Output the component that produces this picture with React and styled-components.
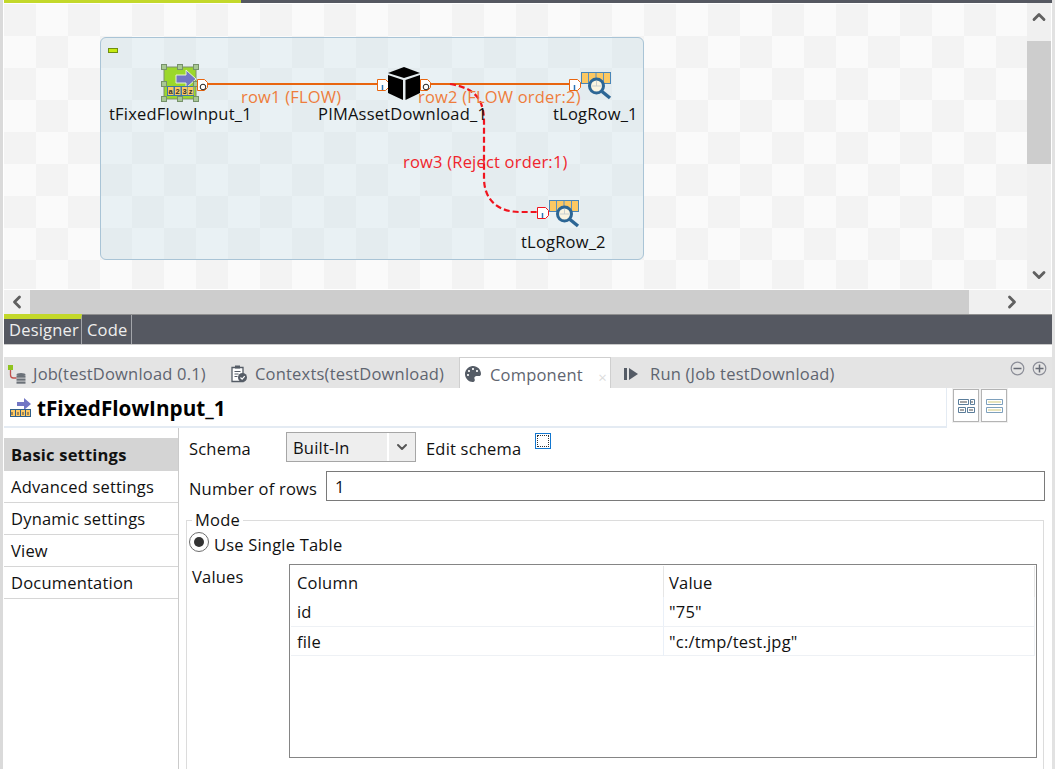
import React from 'react';
import styled, { createGlobalStyle } from 'styled-components';
import { ChevronUp, ChevronDown, ChevronLeft, ChevronRight } from 'lucide-react';
import { FaPalette } from 'react-icons/fa';

const UI_FONT = '"Open Sans", "Noto Sans", sans-serif';

const GlobalStyle = createGlobalStyle`
  html, body { margin: 0; padding: 0; background: #fff; }
  body { font-family: ${UI_FONT}; }
`;

const ORANGE = '#e8650f';
const RED = '#f0141e';

function LogRowIcon({ x, y }) {
  return (
    <g transform={`translate(${x} ${y})`}>
      <rect x="0.5" y="0.5" width="29" height="11" fill="#fcc862" stroke="#4a86b8" />
      <path d="M7.5 1v10M15 1v6M22.5 1v10" stroke="#5a90c0" />
      <circle cx="15.5" cy="14" r="7" fill="#faf4e0" stroke="#2c6695" strokeWidth="3" />
      <path d="M15.5 9v5M10.5 14h10" stroke="#c8cfd0" />
      <path d="M21 19.5l8 6.5" stroke="#2c6695" strokeWidth="3.5" />
    </g>
  );
}

function InConnector({ x, y, color }) {
  return (
    <g transform={`translate(${x} ${y})`}>
      <path d="M.5 .5h8l3 3v5l-3 3h-8z" fill="#fff" stroke={color} />
      <path d="M5.5 6v5" stroke="#2a74b8" strokeWidth="1.5" />
    </g>
  );
}

function OutConnector({ x, y }) {
  return (
    <g transform={`translate(${x} ${y})`}>
      <path d="M.5 .5h7l3 3v5l-3 3h-7z" fill="#fff" stroke={ORANGE} />
      <circle cx="6" cy="8" r="2.8" fill="#fff" stroke="#222" />
    </g>
  );
}

function JobDiagram() {
  const handles = [[164, 67], [180, 67], [196, 67], [164, 84], [196, 84], [164, 99], [180, 99], [196, 99]];
  return (
    <DiagramSvg viewBox="4 4 1023 285">
      <path d="M205 84H378M430 84H570" stroke={ORANGE} strokeWidth="2" fill="none" />
      <path d="M450 84C474 88 484 98 484 122V178C484 200 498 212 520 212H537" stroke={RED} strokeWidth="2.2" strokeDasharray="6 3" fill="none" />

      <rect x="164" y="67" width="32" height="32" fill="#9bd72b" stroke="#7d8f6c" />
      <path d="M176 75h10v-5l10 9-10 9v-5h-10z" fill="#7276c4" stroke="#e8f3d0" />
      <rect x="167" y="86" width="27" height="10" fill="#3c78a8" />
      {[168, 175, 182, 188].map((cx) => (
        <rect key={cx} x={cx} y="87" width="5.5" height="8" fill="#fcc862" />
      ))}
      <CellText x="170.7" y="94">a</CellText>
      <CellText x="177.7" y="94">2</CellText>
      <CellText x="184.7" y="94">3</CellText>
      <CellText x="190.7" y="94">z</CellText>
      {handles.map(([hx, hy]) => (
        <rect key={`${hx}-${hy}`} x={hx - 2.5} y={hy - 2.5} width="5" height="5" fill="#a8c894" stroke="#76916a" />
      ))}
      <OutConnector x={197} y={79} />

      <InConnector x={377} y={79} color={ORANGE} />
      <path d="M404 67l16 6-16 5-16-5z" fill="#000" />
      <path d="M388 75l15 5v20l-15-7z" fill="#000" />
      <path d="M405.500 80l14.500-5v18l-14.500 7z" fill="#000" />
      <OutConnector x={420} y={79} />

      <InConnector x={569} y={79} color={ORANGE} />
      <LogRowIcon x={581} y={72} />

      <InConnector x={537} y={207} color={RED} />
      <LogRowIcon x={549} y={200} />
    </DiagramSvg>
  );
}

function FlowInputSmallIcon() {
  return (
    <svg width="22" height="20" viewBox="0 0 22 20">
      <path d="M7 4h7V0l7 6-7 6V8H7z" fill="#7276c4" />
      <rect x="0.5" y="11.5" width="20" height="7" fill="#fcc862" stroke="#2f5f8a" />
      <path d="M5.5 12v6M10.5 12v6M15.5 12v6" stroke="#2f5f8a" />
      <path d="M2 14v3M8 14v3M13 14v3M18 14v3" stroke="#444" />
    </svg>
  );
}

function JobIcon() {
  return (
    <svg width="18" height="20" viewBox="0 0 18 20">
      <rect x="0" y="1" width="5" height="5" fill="#8fc31f" />
      <path d="M2.500 6v5c0 2 1 3 3 3h3" stroke="#c0504d" strokeWidth="1.3" fill="none" />
      <ellipse cx="13" cy="10.500" rx="4.500" ry="1.600" fill="#6b7178" />
      <rect x="8.500" y="11.500" width="9" height="2.200" fill="#6b7178" />
      <rect x="8.500" y="14.500" width="9" height="2.200" fill="#6b7178" />
      <rect x="8.500" y="17.500" width="9" height="2.200" fill="#6b7178" />
    </svg>
  );
}

function ContextIcon() {
  return (
    <svg width="18" height="18" viewBox="0 0 18 18">
      <path d="M2 2.500h11v14H2z" fill="#fff" stroke="#555c66" strokeWidth="1.3" />
      <rect x="5" y="0.500" width="5" height="3" fill="#555c66" />
      <path d="M4.500 6.500h6M4.500 9h4M4.500 11.500h3" stroke="#555c66" />
      <circle cx="12.500" cy="12.500" r="4.500" fill="#555c66" />
      <path d="M10.500 12.500l1.600 1.600 2.600-3" stroke="#fff" strokeWidth="1.2" fill="none" />
    </svg>
  );
}

function RunIcon() {
  return (
    <svg width="14" height="14" viewBox="0 0 14 14">
      <rect x="0" y="1" width="3" height="12" fill="#555c66" />
      <path d="M5 1l9 6-9 6z" fill="#555c66" />
    </svg>
  );
}

function CircleSign({ plus }) {
  return (
    <svg width="15" height="15" viewBox="0 0 15 15">
      <circle cx="7.500" cy="7.500" r="6.300" fill="none" stroke="#8c8e98" strokeWidth="1.2" />
      <path d={plus ? 'M3.500 7.500h8M7.500 3.500v8' : 'M3.500 7.500h8'} stroke="#666a74" strokeWidth="1.5" />
    </svg>
  );
}

function GridLayoutIcon() {
  return (
    <svg width="17" height="14" viewBox="0 0 17 14">
      <path d="M.5 .5h10v5H.5zM12.500 .5h4v5h-4zM.5 8.500h7v5h-7zM9.500 8.500h7v5h-7z" fill="#fff" stroke="#5a7d9a" />
      <path d="M2 3h7M14 2v2M2 11h4M11 11h4" stroke="#888" strokeWidth="1.5" />
    </svg>
  );
}

function RowsLayoutIcon() {
  return (
    <svg width="17" height="14" viewBox="0 0 17 14">
      <path d="M.5 .5h16v5H.5zM.5 8.500h16v5H.5z" fill="#fff" stroke="#7ea0bc" />
      <path d="M2 3h13M2 11h13" stroke="#e8e4bc" strokeWidth="2" />
    </svg>
  );
}

export default function App() {
  return (
    <Frame>
      <GlobalStyle />
      <TopBar><TopProgress /></TopBar>

      <Editor>
        <Canvas>
          <JobGroup><GroupToggle /></JobGroup>
          <JobDiagram />
          <WireLabel $x={237} $y={83} $color="#ee7d3c">row1 (FLOW)</WireLabel>
          <WireLabel $x={414} $y={83} $color="#ee7d3c">row2 (FLOW order:2)</WireLabel>
          <WireLabel $x={399} $y={148} $color="#f0252d">row3 (Reject order:1)</WireLabel>
          <NodeName $x={105} $y={100}>tFixedFlowInput_1</NodeName>
          <NodeName $x={314} $y={100}>PIMAssetDownload_1</NodeName>
          <NodeName $x={549} $y={100}>tLogRow_1</NodeName>
          <NodeName $x={517} $y={228}>tLogRow_2</NodeName>
        </Canvas>
        <VScroll>
          <UpArrow><ChevronUp size={20} strokeWidth={3.4} color="#606060" /></UpArrow>
          <VThumb />
          <ArrowGrow><ChevronDown size={20} strokeWidth={3.4} color="#606060" /></ArrowGrow>
        </VScroll>
        <HScroll>
          <LeftArrow><ChevronLeft size={20} strokeWidth={3.4} color="#606060" /></LeftArrow>
          <HThumb />
          <RightArrow><ChevronRight size={20} strokeWidth={3.4} color="#606060" /></RightArrow>
        </HScroll>
      </Editor>

      <ModeBar>
        <ModeTab $active>Designer</ModeTab>
        <ModeTab>Code</ModeTab>
      </ModeBar>

      <ViewTabs>
        <ViewTab $w={218} $pad={4} $gap={7}><TabIcon><JobIcon /></TabIcon>Job(testDownload 0.1)</ViewTab>
        <ViewTab $w={237} $pad={8} $gap={7}><TabIcon><ContextIcon /></TabIcon>Contexts(testDownload)</ViewTab>
        <ViewTab $w={152} $pad={4} $gap={8} $active>
          <TabIcon><FaPalette size={16} color="#555c66" /></TabIcon>Component
          <TabClose>×</TabClose>
        </ViewTab>
        <ViewTab $w={240} $pad={11} $gap={10}><TabIcon><RunIcon /></TabIcon>Run (Job testDownload)</ViewTab>
        <TabActions><CircleSign /><CircleSign plus /></TabActions>
      </ViewTabs>

      <TitleRow>
        <TitleBox>
          <FlowInputSmallIcon />
          <TitleText>tFixedFlowInput_1</TitleText>
        </TitleBox>
        <LayoutButton><GridLayoutIcon /></LayoutButton>
        <LayoutButton><RowsLayoutIcon /></LayoutButton>
      </TitleRow>

      <Body>
        <Sidebar>
          <SideItem $active>Basic settings</SideItem>
          <SideItem>Advanced settings</SideItem>
          <SideItem>Dynamic settings</SideItem>
          <SideItem>View</SideItem>
          <SideItem>Documentation</SideItem>
        </Sidebar>
        <Settings>
          <SchemaRow>
            <FieldLabel $w={97} $top={2}>Schema</FieldLabel>
            <SelectBox>
              <SelectValue>Built-In</SelectValue>
              <SelectArrow><ChevronDown size={16} strokeWidth={3} color="#555" /></SelectArrow>
            </SelectBox>
            <EditLabel>Edit schema</EditLabel>
            <EditButton><EditDots /></EditButton>
          </SchemaRow>
          <RowsRow>
            <FieldLabel $w={137} $top={4}>Number of rows</FieldLabel>
            <TextInput>1</TextInput>
          </RowsRow>
          <ModeGroup>
            <ModeLegend>Mode</ModeLegend>
            <RadioRow>
              <RadioOuter><RadioDot /></RadioOuter>
              <RadioText>Use Single Table</RadioText>
            </RadioRow>
            <ValuesRow>
              <ValuesLabel>Values</ValuesLabel>
              <ValuesTable>
                <TableHead>
                  <HeadCell>Column</HeadCell>
                  <HeadCell $second>Value</HeadCell>
                </TableHead>
                <TableRow $h={29}>
                  <BodyCell>id</BodyCell>
                  <BodyCell $second>"75"</BodyCell>
                </TableRow>
                <TableRow $h={28}>
                  <BodyCell>file</BodyCell>
                  <BodyCell $second>"c:/tmp/test.jpg"</BodyCell>
                </TableRow>
              </ValuesTable>
            </ValuesRow>
          </ModeGroup>
        </Settings>
      </Body>
    </Frame>
  );
}

const Frame = styled.div`
  box-sizing: border-box;
  width: 1055px;
  height: 769px;
  overflow: hidden;
  display: flex;
  flex-direction: column;
  padding-left: 1px;
  border-left: 3px solid #dadada;
  border-right: 3px solid #e2e2e2;
  background: #fff;
  color: #111;
  font-family: ${UI_FONT};
  font-size: 16.5px;
  letter-spacing: 0.2px;
`;

const TopBar = styled.div`
  height: 3px;
  flex: none;
  background: #555861;
`;

const TopProgress = styled.div`
  width: 237px;
  height: 100%;
  background: #c3d82a;
`;

const Editor = styled.div`
  flex: none;
  display: grid;
  grid-template-columns: 1023px 24px;
  grid-template-rows: 286px 25px;
  height: 311px;
`;

const Canvas = styled.div`
  position: relative;
  margin-top: 1px;
  overflow: hidden;
  background-color: #fafafa;
  background-image:
    linear-gradient(45deg, #f3f3f3 25%, transparent 25%, transparent 75%, #f3f3f3 75%),
    linear-gradient(45deg, #f3f3f3 25%, transparent 25%, transparent 75%, #f3f3f3 75%);
  background-size: 64px 64px;
  background-position: 32px 0, 0 32px;
`;

const JobGroup = styled.div`
  position: absolute;
  left: 96px;
  top: 33px;
  box-sizing: border-box;
  width: 544px;
  height: 223px;
  border: 1px solid #a9c4d6;
  border-radius: 6px;
  background: rgba(205, 225, 235, 0.38);
`;

const GroupToggle = styled.div`
  position: absolute;
  left: 7px;
  top: 10px;
  box-sizing: border-box;
  width: 10px;
  height: 5px;
  background: #c6ea10;
  border: 1px solid #6f8f10;
`;

const DiagramSvg = styled.svg`
  position: absolute;
  left: 0;
  top: 0;
  width: 1023px;
  height: 285px;
`;

const CellText = styled.text`
  font-family: "Liberation Sans", sans-serif;
  font-size: 7.5px;
  font-weight: 700;
  fill: #333;
  text-anchor: middle;
`;

const WireLabel = styled.div`
  position: absolute;
  left: ${(p) => p.$x}px;
  top: ${(p) => p.$y}px;
  color: ${(p) => p.$color};
  line-height: 20px;
  white-space: nowrap;
`;

const NodeName = styled.div`
  position: absolute;
  left: ${(p) => p.$x}px;
  top: ${(p) => p.$y}px;
  color: #111;
  line-height: 20px;
  white-space: nowrap;
`;

const VScroll = styled.div`
  display: flex;
  flex-direction: column;
  background: #f0f0f0;
`;

const HScroll = styled.div`
  grid-column: 1 / 3;
  display: flex;
  background: #f0f0f0;
  margin-top: 1px;
`;

const UpArrow = styled.div`
  flex: none;
  height: 38px;
  box-sizing: border-box;
  padding-bottom: 10px;
  display: flex;
  align-items: center;
  justify-content: center;
`;

const LeftArrow = styled.div`
  flex: none;
  width: 26px;
  display: flex;
  align-items: center;
  justify-content: center;
`;

const ArrowGrow = styled.div`
  flex: 1;
  display: flex;
  align-items: flex-end;
  justify-content: center;
  padding-bottom: 4px;
`;

const RightArrow = styled.div`
  flex: 1;
  display: flex;
  align-items: center;
  justify-content: center;
  padding-left: 4px;
`;

const VThumb = styled.div`
  flex: none;
  height: 123px;
  background: #cdcdcd;
`;

const HThumb = styled.div`
  flex: none;
  width: 939px;
  background: #cdcdcd;
`;

const ModeBar = styled.div`
  flex: none;
  display: flex;
  height: 29px;
  border-top: 1px solid #8f8f8f;
  border-bottom: 1px solid #c9c9c9;
  background: #555861;
`;

const ModeTab = styled.div`
  box-sizing: border-box;
  width: ${(p) => (p.$active ? '78px' : '50px')};
  height: ${(p) => (p.$active ? '30px' : '29px')};
  margin-top: ${(p) => (p.$active ? '-1px' : '0')};
  padding-left: 5px;
  border-top: ${(p) => (p.$active ? '5px solid #c3d82a' : 'none')};
  border-right: 1px solid #a3a5aa;
  line-height: ${(p) => (p.$active ? '22px' : '30px')};
  color: #eeeeee;
  white-space: nowrap;
`;

const ViewTabs = styled.div`
  flex: none;
  display: flex;
  align-items: stretch;
  height: 31px;
  margin-top: 12px;
  background: #e4e4e4;
`;

const ViewTab = styled.div`
  position: relative;
  box-sizing: border-box;
  width: ${(p) => p.$w}px;
  display: flex;
  align-items: center;
  gap: ${(p) => p.$gap}px;
  padding: 2px 0 0 ${(p) => p.$pad}px;
  color: #5f6570;
  white-space: nowrap;
  ${(p) => p.$active && `
    background: #fff;
    border: 1px solid #cfcfcf;
    border-bottom: none;
  `}
`;

const TabIcon = styled.span`
  display: inline-flex;
  flex: none;
  width: 18px;
  justify-content: center;
`;

const TabClose = styled.span`
  position: absolute;
  right: 3px;
  top: 9px;
  color: #dcdcdc;
  font-size: 15px;
`;

const TabActions = styled.div`
  margin-left: auto;
  display: flex;
  align-items: center;
  gap: 7px;
  padding: 0 5px 9px 0;
`;

const TitleRow = styled.div`
  flex: none;
  display: flex;
  align-items: flex-start;
  height: 40px;
  gap: 2px;
`;

const TitleBox = styled.div`
  box-sizing: border-box;
  width: 943px;
  height: 40px;
  margin-right: 4px;
  display: flex;
  align-items: center;
  gap: 5px;
  padding: 2px 0 0 6px;
  border-right: 1px solid #e4ebf3;
  border-bottom: 2px solid #e4ebf3;
`;

const TitleText = styled.div`
  font-size: 20.7px;
  font-weight: 700;
  letter-spacing: 0;
  color: #000;
`;

const LayoutButton = styled.div`
  box-sizing: border-box;
  width: 26px;
  height: 33px;
  margin-top: 1px;
  display: flex;
  align-items: center;
  justify-content: center;
  border: 1px solid #b4b4b4;
  box-shadow: 0 0 0 1px #f0f0f0;
`;

const Body = styled.div`
  flex: 1;
  min-height: 0;
  display: flex;
`;

const Sidebar = styled.div`
  flex: none;
  box-sizing: border-box;
  width: 175px;
  padding-top: 10px;
  border-right: 1px solid #cbcbcb;
`;

const SideItem = styled.div`
  box-sizing: border-box;
  height: ${(p) => (p.$active ? '33px' : '32px')};
  padding-left: 7px;
  line-height: ${(p) => (p.$active ? '33px' : '31px')};
  font-weight: ${(p) => (p.$active ? 700 : 400)};
  background: ${(p) => (p.$active ? '#d4d4d4' : '#fff')};
  border-bottom: ${(p) => (p.$active ? 'none' : '1px solid #d6d6d6')};
`;

const Settings = styled.div`
  flex: 1;
  min-width: 0;
  display: flex;
  flex-direction: column;
  padding: 4px 7px 0 10px;
`;

const SchemaRow = styled.div`
  display: flex;
  align-items: center;
  height: 30px;
`;

const FieldLabel = styled.div`
  flex: none;
  width: ${(p) => p.$w}px;
  padding-top: ${(p) => p.$top}px;
  white-space: nowrap;
`;

const SelectBox = styled.div`
  box-sizing: border-box;
  width: 130px;
  height: 30px;
  display: flex;
  background: #eeeeee;
  border: 1px solid #a6a6a6;
`;

const SelectValue = styled.div`
  flex: 1;
  padding-left: 6px;
  line-height: 29px;
`;

const SelectArrow = styled.div`
  width: 26px;
  display: flex;
  align-items: center;
  justify-content: center;
  border-left: 2px solid #fff;
`;

const EditLabel = styled.div`
  margin-left: 10px;
  width: 109px;
  padding-top: 2px;
  white-space: nowrap;
`;

const EditButton = styled.div`
  box-sizing: border-box;
  width: 16px;
  height: 16px;
  margin-bottom: 12px;
  border: 1px solid #1277d0;
  padding: 1px;
`;

const EditDots = styled.div`
  box-sizing: border-box;
  height: 100%;
  border: 1px dotted #333;
`;

const RowsRow = styled.div`
  display: flex;
  align-items: center;
  height: 30px;
  margin-top: 9px;
`;

const TextInput = styled.div`
  box-sizing: border-box;
  width: 719px;
  height: 30px;
  padding-left: 8px;
  line-height: 30px;
  border: 1px solid #7a7a7a;
`;

const ModeGroup = styled.fieldset`
  position: relative;
  box-sizing: border-box;
  margin: 9px 1px 0 -3px;
  padding: 2px 0 0 2px;
  flex: 1;
  min-height: 300px;
  border: 1px solid #dcdcdc;
`;

const ModeLegend = styled.legend`
  margin-left: 3px;
  padding: 0 3px;
  line-height: 20px;
`;

const RadioRow = styled.div`
  display: flex;
  align-items: center;
  gap: 5px;
  height: 20px;
`;

const RadioText = styled.span`
  padding-top: 4px;
`;

const RadioOuter = styled.div`
  box-sizing: border-box;
  width: 20px;
  height: 20px;
  display: flex;
  align-items: center;
  justify-content: center;
  border: 1px solid #6d6d6d;
  border-radius: 50%;
`;

const RadioDot = styled.div`
  width: 10px;
  height: 10px;
  border-radius: 50%;
  background: #333;
`;

const ValuesRow = styled.div`
  display: flex;
  align-items: flex-start;
  margin-top: 12px;
`;

const ValuesLabel = styled.div`
  flex: none;
  width: 100px;
  padding: 1px 0 0 3px;
  box-sizing: border-box;
`;

const ValuesTable = styled.div`
  box-sizing: border-box;
  width: 748px;
  height: 194px;
  padding: 1px;
  border: 1px solid #858585;
`;

const TableHead = styled.div`
  display: grid;
  grid-template-columns: 372px 1fr;
  height: 31px;
`;

const TableRow = styled.div`
  display: grid;
  grid-template-columns: 372px 1fr;
  height: ${(p) => p.$h}px;
  border-bottom: 1px solid #eef1f5;
`;

const HeadCell = styled.div`
  padding-left: ${(p) => (p.$second ? '5px' : '6px')};
  line-height: 34px;
  border-left: ${(p) => (p.$second ? '1px solid #e6e6e6' : 'none')};
  border-right: ${(p) => (p.$second ? '1px solid #e6e6e6' : 'none')};
`;

const BodyCell = styled.div`
  padding-left: ${(p) => (p.$second ? '5px' : '6px')};
  line-height: 29px;
  border-left: ${(p) => (p.$second ? '1px solid #eaf0f8' : 'none')};
  border-right: ${(p) => (p.$second ? '1px solid #eef1f5' : 'none')};
`;
